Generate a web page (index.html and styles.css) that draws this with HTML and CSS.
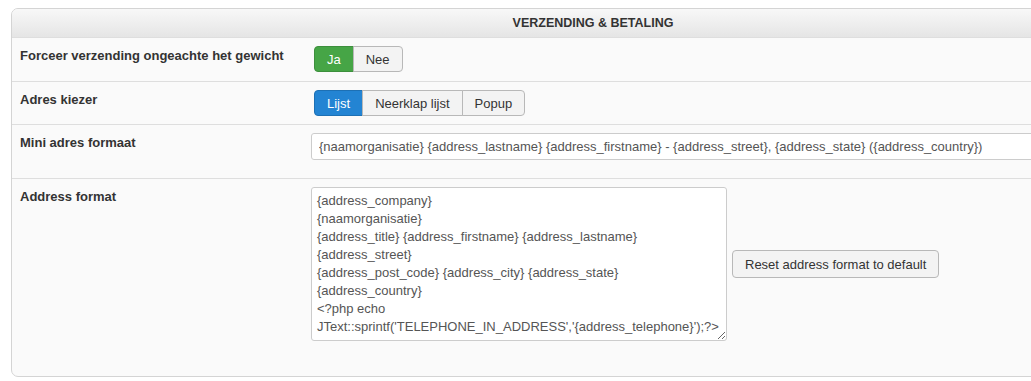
FILE: index.html
```html
<!DOCTYPE html>
<html lang="nl">
<head>
    <meta charset="UTF-8">
    <title>Verzending & Betaling</title>
    <link rel="stylesheet" href="styles.css">
</head>
<body>
    <div class="panel">
        <div class="panel-head">VERZENDING &amp; BETALING</div>

        <div class="row first">
            <div class="label">Forceer verzending ongeachte het gewicht</div>
            <div class="value">
                <div class="btn-group">
                    <button class="btn btn-success">Ja</button>
                    <button class="btn">Nee</button>
                </div>
            </div>
        </div>

        <div class="row">
            <div class="label">Adres kiezer</div>
            <div class="value">
                <div class="btn-group">
                    <button class="btn btn-primary">Lijst</button>
                    <button class="btn">Neerklap lijst</button>
                    <button class="btn">Popup</button>
                </div>
            </div>
        </div>

        <div class="row">
            <div class="label">Mini adres formaat</div>
            <div class="value">
                <input class="text-input" type="text" value="{naamorganisatie} {address_lastname} {address_firstname} - {address_street}, {address_state} ({address_country})">
            </div>
        </div>

        <div class="row last">
            <div class="label">Address format</div>
            <div class="value inline">
                <textarea class="format-box">{address_company}
{naamorganisatie}
{address_title} {address_firstname} {address_lastname}
{address_street}
{address_post_code} {address_city} {address_state}
{address_country}
&lt;?php echo
JText::sprintf('TELEPHONE_IN_ADDRESS','{address_telephone}');?&gt;</textarea>
                <button class="btn reset-btn">Reset address format to default</button>
            </div>
        </div>
    </div>
</body>
</html>
```

FILE: styles.css
```css
body {
    margin: 0;
    padding: 8px 0 0 11px;
    background-color: #fff;
    font-family: "Liberation Sans", Arial, sans-serif;
    font-size: 13px;
    color: #333;
    overflow: hidden;
}
.panel {
    width: 1164px;
    height: 369px;
    box-sizing: border-box;
    border: 1px solid #d4d4d4;
    border-radius: 7px;
    background-color: #fafafa;
    overflow: hidden;
}
.panel-head {
    height: 28px;
    line-height: 28px;
    text-align: center;
    font-size: 12.5px;
    font-weight: bold;
    color: #333;
    background: linear-gradient(#f8f8f8, #e5e5e5);
}
.row {
    display: flex;
    border-top: 1px solid #dedede;
    padding: 8px 8px;
}
.row.first {
    padding-bottom: 9px;
}
.row.last {
    padding-bottom: 34px;
}
.label {
    width: 291px;
    flex-shrink: 0;
    font-weight: bold;
    line-height: 20px;
}
.value {
    flex: 1;
}
.value.inline {
    display: flex;
    align-items: center;
    gap: 5px;
}
.btn-group {
    display: inline-flex;
    margin-left: 3px;
}
.btn {
    font-family: "Liberation Sans", Arial, sans-serif;
    font-size: 13px;
    color: #333;
    height: 26px;
    padding: 0 12px;
    background-color: #f3f3f3;
    border: 1px solid #b8b8b8;
    border-radius: 4px;
    margin: 0;
}
.btn-group .btn {
    border-radius: 0;
    margin-left: -1px;
}
.btn-group .btn:first-child {
    border-radius: 4px 0 0 4px;
    margin-left: 0;
}
.btn-group .btn:last-child {
    border-radius: 0 4px 4px 0;
}
.btn-success {
    background-color: #46a546;
    border-color: #3d8f3d;
    color: #fff;
}
.btn-primary {
    background-color: #2384d3;
    border-color: #1d70b4;
    color: #fff;
}
.text-input {
    display: block;
    width: 900px;
    height: 27px;
    box-sizing: border-box;
    padding: 4px 7px;
    font-family: "Liberation Sans", Arial, sans-serif;
    font-size: 13px;
    color: #555;
    border: 1px solid #ccc;
    border-radius: 3px;
    background-color: #fff;
    margin: 0 0 10px;
}
.format-box {
    width: 416px;
    height: 154px;
    box-sizing: border-box;
    padding: 4px 4px 4px 5px;
    font-family: "Liberation Sans", Arial, sans-serif;
    font-size: 13px;
    line-height: 18px;
    color: #555;
    border: 1px solid #ccc;
    border-radius: 3px;
    background-color: #fff;
    margin: 0;
    overflow: hidden;
}
.reset-btn {
    height: 28px;
    padding: 0 12px;
}
```
